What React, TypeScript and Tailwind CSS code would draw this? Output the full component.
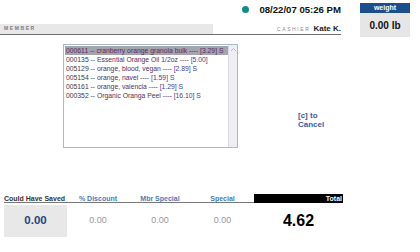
import React from 'react';

const items = [
  { code: '000611', name: 'cranberry orange granola bulk ----', price: '[3.29] S' },
  { code: '000135', name: 'Essential Orange Oil 1/2oz ----', price: '[5.00]' },
  { code: '005129', name: 'orange, blood, vegan ----', price: '[2.89] S' },
  { code: '005154', name: 'orange, navel ----', price: '[1.59] S' },
  { code: '005161', name: 'orange, valencia ----', price: '[1.29] S' },
  { code: '000352', name: 'Organic Oranga Peel ----', price: '[16.10] S' },
];

export default function App() {
  return (
    <div className="w-[420px] h-[252px] bg-white flex font-['Liberation_Sans',Arial,sans-serif] overflow-hidden">
      <div className="w-[341px] flex flex-col">
        {/* clock */}
        <div className="h-[24px] flex items-start justify-end pt-[4px]">
          <div className="flex items-center gap-[10px]">
            <span className="w-[7px] h-[7px] rounded-full bg-[#168a8a]" />
            <span className="text-[9.6px] font-bold text-[#111] leading-[11px]">08/22/07 05:26 PM</span>
          </div>
        </div>

        {/* member / cashier */}
        <div className="flex items-stretch h-[11px] border-b-[1.5px] border-[#6e6e6e]">
          <div className="w-[213px] bg-[#e8e8e8] flex items-center pl-[4px]">
            <span className="text-[5px] font-bold tracking-[1.6px] text-[#7a7a86]">MEMBER</span>
          </div>
          <div className="flex-1 flex items-end justify-end gap-[3px] pb-[1px]">
            <span className="text-[5px] tracking-[1.6px] text-[#888] leading-[8px]">CASHIER</span>
            <span className="text-[8px] font-bold text-[#222] leading-[9px]">Kate K.</span>
          </div>
        </div>

        {/* list + cancel */}
        <div className="flex mt-[9px]">
          <div className="ml-[63px] w-[175px] h-[104px] border border-[#a9b9cc] flex bg-white">
            <div className="flex-1 pt-[1px] pl-[1px]">
              {items.map((it, i) => (
                <div
                  key={it.code}
                  className={
                    'h-[9px] leading-[9px] text-[6.8px] whitespace-nowrap pl-[1px] ' +
                    (i === 0 ? 'bg-[#a4a4ae] text-[#5a2c5e] w-[163px]' : 'text-[#3a3a4a]')
                  }
                >
                  <span>{it.code}</span>
                  <span> -- </span>
                  <span className={i === 0 ? '' : 'text-[#55305a]'}>{it.name}</span>
                  <span className={i === 0 ? '' : 'text-[#4a3c8c]'}> {it.price}</span>
                </div>
              ))}
            </div>
            <div className="w-[9px] bg-[#eeeef4] border-l border-[#dcdce6] flex justify-center pt-[2px]">
              <svg width="7" height="5" viewBox="0 0 7 5">
                <path d="M1 4 L3.5 1.5 L6 4" fill="none" stroke="#b8b8c8" strokeWidth="1" />
              </svg>
            </div>
          </div>
          <div className="ml-[60px] mt-[67px] text-[8px] font-bold text-[#3b5c9c] leading-[9px]">
            [c] to
            <br />
            Cancel
          </div>
        </div>

        {/* totals */}
        <div className="mt-[46px] ml-[4px] grid grid-cols-[63px_62px_62px_63px_89px]">
          <div className="h-[9px] text-[7px] font-bold text-[#333] leading-[9px] whitespace-nowrap border-b border-[#777]">Could Have Saved</div>
          <div className="h-[9px] text-[7px] font-bold text-[#4a7ab6] leading-[9px] text-center border-b border-[#777]">% Discount</div>
          <div className="h-[9px] text-[7px] font-bold text-[#4a7ab6] leading-[9px] text-center border-b border-[#777]">Mbr Special</div>
          <div className="h-[9px] text-[7px] font-bold text-[#4a7ab6] leading-[9px] text-center border-b border-[#777]">Special</div>
          <div className="h-[9px] text-[7px] font-bold text-white leading-[9px] text-right bg-black pr-[1px]">Total</div>

          <div className="mt-[2px] h-[32px] bg-[#e8e8e8] flex items-center justify-center text-[11.5px] font-bold text-[#1a4680]">0.00</div>
          <div className="mt-[2px] h-[32px] flex items-center justify-center text-[9px] text-[#999]">0.00</div>
          <div className="mt-[2px] h-[32px] flex items-center justify-center text-[9px] text-[#999]">0.00</div>
          <div className="mt-[2px] h-[32px] flex items-center justify-center text-[9px] text-[#999]">0.00</div>
          <div className="mt-[2px] h-[32px] flex items-center justify-center text-[16px] font-bold text-black">4.62</div>
        </div>
      </div>

      {/* weight */}
      <div className="ml-[19px] pt-[3px]">
        <div className="w-[50px]">
          <div className="h-[10px] bg-[#1c4d8c] text-white text-[7px] font-bold leading-[10px] text-center">weight</div>
          <div className="h-[24px] bg-[#e6e6e6] flex items-center justify-center text-[10px] font-bold text-[#111]">0.00 lb</div>
        </div>
      </div>
    </div>
  );
}
